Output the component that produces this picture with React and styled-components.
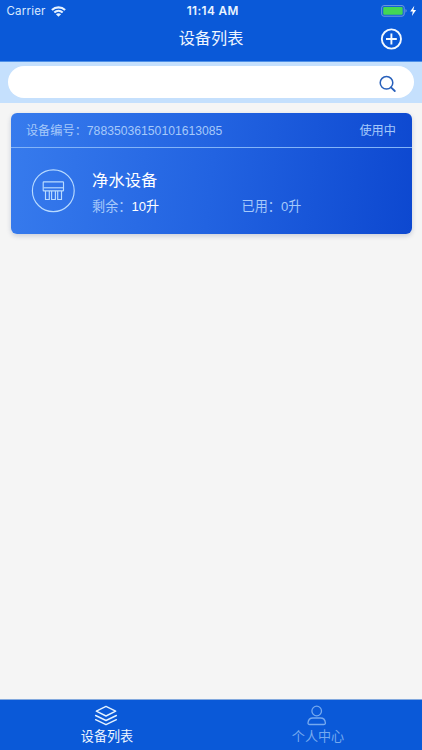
import React from "react";
import styled, { createGlobalStyle } from "styled-components";

const GlobalStyle = createGlobalStyle`
  * { box-sizing: border-box; }
  body {
    margin: 0;
    background: #f5f5f5;
    font-family: "Liberation Sans", "Noto Sans CJK SC", sans-serif;
  }
`;

const Screen = styled.div`
  display: flex;
  flex-direction: column;
  width: 422px;
  height: 750px;
  overflow: hidden;
  background: #f5f5f5;
`;

const Header = styled.header`
  height: 62px;
  flex: none;
  background: #0a59d8;
  border-bottom: 1px solid #4f91e8;
  color: #fff;
`;

const StatusBar = styled.div`
  display: grid;
  grid-template-columns: 1fr auto 1fr;
  align-items: center;
  height: 22px;
  padding: 0 5px 0 6.5px;
  font-family: Inter, sans-serif;
  font-size: 11.5px;
  line-height: 22px;
`;

const Carrier = styled.div`
  display: flex;
  align-items: center;
  gap: 5px;
  color: #d9e9ff;
  letter-spacing: 0.2px;
`;

const Clock = styled.div`
  margin-left: 2px;
  font-size: 11.8px;
  font-weight: 600;
  letter-spacing: 0.4px;
  color: #eaf4ff;
`;

const Power = styled.div`
  display: flex;
  justify-content: flex-end;
`;

const TitleBar = styled.div`
  display: grid;
  grid-template-columns: 1fr auto 1fr;
  align-items: center;
  height: 33px;
  padding: 0 20px;
`;

const Title = styled.h1`
  grid-column: 2;
  margin: 0;
  font-size: 16.2px;
  font-weight: 400;
  line-height: 33px;
  color: #eef6ff;
`;

const AddButton = styled.button`
  justify-self: end;
  display: flex;
  padding: 0;
  border: 0;
  background: none;
`;

const SearchBar = styled.div`
  flex: none;
  height: 41px;
  padding: 4px 8px 5px;
  background: #c5e0fd;
`;

const SearchField = styled.div`
  display: flex;
  align-items: center;
  justify-content: flex-end;
  height: 32px;
  padding: 3px 17.5px 0 0;
  border-radius: 16px;
  background: #fff;
`;

const Content = styled.main`
  flex: 1;
  padding: 10px 10.5px;
`;

const Card = styled.article`
  height: 121px;
  border-radius: 6px;
  background: linear-gradient(96deg, #377bed 0%, #2263e1 50%, #0d48d0 100%);
  box-shadow: 0 2px 5px rgba(30, 50, 100, 0.2);
  color: #a6c9fa;
`;

const CardHead = styled.div`
  display: flex;
  justify-content: space-between;
  height: 35px;
  padding: 0 15.5px 0 15.4px;
  border-bottom: 1px solid #83b4f8;
  font-size: 12.2px;
  line-height: 36px;
`;

const CardBody = styled.div`
  display: flex;
  align-items: center;
  height: 86px;
  padding-left: 20.8px;
  gap: 16.8px;
`;

const Details = styled.div`
  flex: 1;
  padding-top: 3px;
`;

const DeviceName = styled.div`
  font-size: 16.3px;
  line-height: 24px;
  color: #fff;
`;

const Usage = styled.div`
  display: grid;
  grid-template-columns: 149.5px 1fr;
  margin-top: 4px;
  font-size: 13.1px;
  line-height: 22px;
`;

const Amount = styled.span`
  color: ${(p) => (p.$bright ? "#fff" : "inherit")};
`;

const TabBar = styled.nav`
  display: grid;
  grid-template-columns: 1fr 1fr;
  flex: none;
  height: 51px;
  border-top: 1px solid #83a9de;
  background: #0a59d8;
`;

const Tab = styled.div`
  display: flex;
  flex-direction: column;
  align-items: center;
  padding-top: 5px;
  font-size: 13.1px;
  line-height: 18px;
  color: ${(p) => (p.$active ? "#eef6ff" : "#75a9ef")};

  svg { margin-bottom: 2px; }
`;

const TabLabel = styled.span`
  padding-left: 3px;
`;

const WifiIcon = () => (
  <svg width="15" height="11" viewBox="0 0 15 11" fill="none" stroke="#e6f2ff" strokeWidth="2.1">
    <path d="M.9 4.1C4.6.4 10.4.4 14.1 4.1" />
    <path d="M3.3 6.6c2.4-2.3 6-2.3 8.4 0" />
    <path d="M7.5 10.8 4.9 8.2c1.4-1.3 3.8-1.3 5.2 0Z" fill="#e6f2ff" stroke="none" />
  </svg>
);

const BatteryIcon = () => (
  <svg width="36" height="12" viewBox="0 0 36 12" fill="none">
    <rect x=".7" y=".6" width="22.5" height="10.6" rx="2.2" stroke="#729cdd" />
    <rect x="2.2" y="2.1" width="19.5" height="7.6" rx="1" fill="#43d654" />
    <path d="M24.5 4.1c1.5.6 1.5 3 0 3.6Z" fill="#729cdd" />
    <path d="m33.3.7-4.1 5.8h2.6l-.9 4.6 4.2-6h-2.7Z" fill="#fff" />
  </svg>
);

const PlusIcon = () => (
  <svg width="22" height="22" viewBox="0 0 22 22" fill="none" stroke="#f2f8ff" strokeWidth="1.9">
    <circle cx="11.4" cy="11" r="9.6" />
    <path d="M6 11h10.8M11.4 5.6v10.8" />
  </svg>
);

const SearchIcon = () => (
  <svg width="18" height="18" viewBox="0 0 18 18" fill="none" stroke="#2860bb" strokeWidth="1.5" strokeLinecap="round">
    <circle cx="7.5" cy="7.8" r="6.3" />
    <path d="m12 12.3 3.8 3.7" strokeWidth="1.8" />
  </svg>
);

const PurifierIcon = () => (
  <svg width="44" height="44" viewBox="0 0 44 44" fill="none" stroke="#b9dbff" strokeWidth="1.15">
    <circle cx="22.3" cy="21.7" r="20.9" />
    <rect x="12.2" y="12.8" width="20.3" height="9.1" rx=".6" />
    <path d="M12.5 18.8h20" />
    <path d="M14.5 22.1v8.4h3.8v-8.4M20.6 22.1v8.4h3.8v-8.4M26.7 22.1v8.4h3.8v-8.4" />
  </svg>
);

const LayersIcon = () => (
  <svg width="24" height="21" viewBox="0 0 24 21" fill="none" stroke="#e4f2ff" strokeWidth="1.4" strokeLinejoin="round" strokeLinecap="round">
    <path d="m12 1.4 9.7 4.8L12 11 2.3 6.2Z" />
    <path d="m1.6 10.5 10.4 5 10.4-5M1.6 14.7l10.4 5 10.4-5" />
  </svg>
);

const PersonIcon = () => (
  <svg width="20" height="21" viewBox="0 0 20 21" fill="none" stroke="#75a9ef" strokeWidth="1.3">
    <circle cx="9.7" cy="6" r="4.8" />
    <path d="M2.7 19.5c-1.2 0-1.8-.6-1.7-1.6.3-3.1 2.2-4.9 5-4.9h7.4c2.8 0 4.7 1.8 5 4.9.1 1-.5 1.6-1.7 1.6Z" />
  </svg>
);

export default function App() {
  return (
    <>
      <GlobalStyle />
      <Screen>
        <Header>
          <StatusBar>
            <Carrier>Carrier <WifiIcon /></Carrier>
            <Clock>11:14 AM</Clock>
            <Power><BatteryIcon /></Power>
          </StatusBar>
          <TitleBar>
            <Title>设备列表</Title>
            <AddButton aria-label="添加设备"><PlusIcon /></AddButton>
          </TitleBar>
        </Header>
        <SearchBar>
          <SearchField><SearchIcon /></SearchField>
        </SearchBar>
        <Content>
          <Card>
            <CardHead>
              <span>设备编号：78835036150101613085</span>
              <span>使用中</span>
            </CardHead>
            <CardBody>
              <PurifierIcon />
              <Details>
                <DeviceName>净水设备</DeviceName>
                <Usage>
                  <span>剩余：<Amount $bright>10升</Amount></span>
                  <span>已用：<Amount>0升</Amount></span>
                </Usage>
              </Details>
            </CardBody>
          </Card>
        </Content>
        <TabBar>
          <Tab $active><LayersIcon /><TabLabel>设备列表</TabLabel></Tab>
          <Tab><PersonIcon /><TabLabel>个人中心</TabLabel></Tab>
        </TabBar>
      </Screen>
    </>
  );
}
